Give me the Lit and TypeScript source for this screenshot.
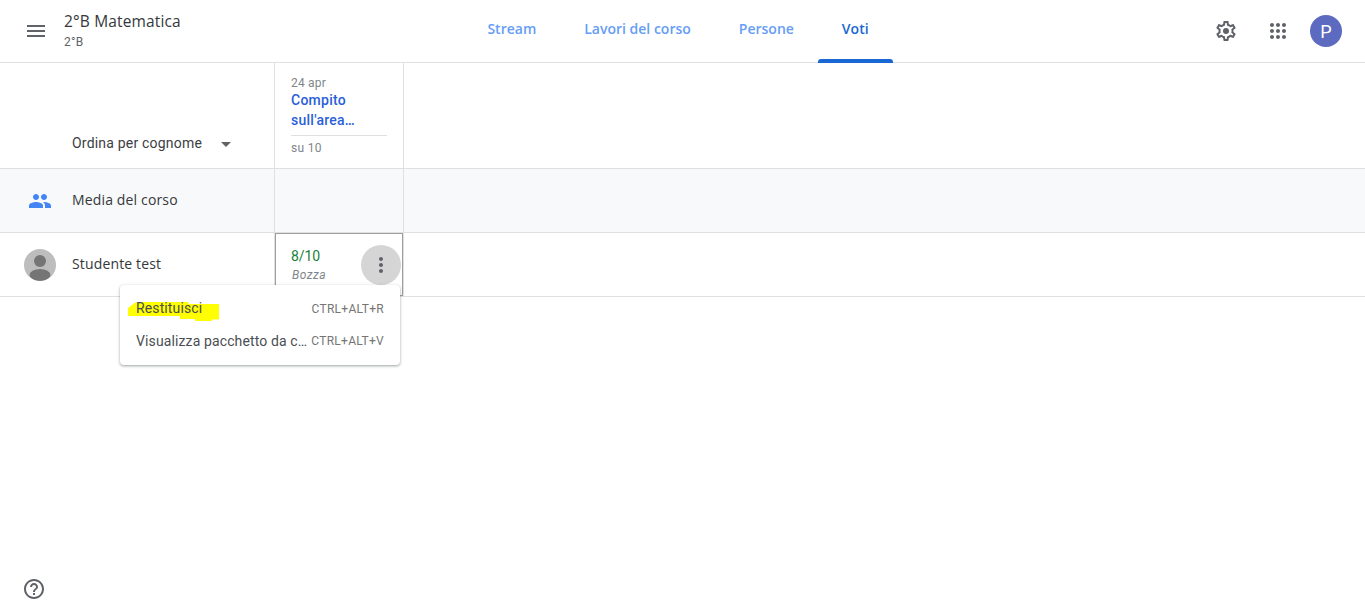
import { LitElement, html, css } from "lit";
import { customElement } from "lit/decorators.js";

@customElement("app-root")
export class AppRoot extends LitElement {
  static styles = css`
    :host { display: block; position: relative; height: 610px; overflow: hidden; background: #fff; font-family: Roboto, "Liberation Sans", sans-serif; color: #3c4043; }
    * { box-sizing: border-box; }
    .header { height: 63px; border-bottom: 1px solid #e0e0e0; display: grid; grid-template-columns: 1fr auto 1fr; align-items: stretch; }
    .left { display: flex; align-items: center; padding-left: 24px; }
    .menu-btn { width: 24px; height: 24px; display: block; fill: #5f6368; }
    .title { margin-left: 16px; display: flex; flex-direction: column; padding-bottom: 2px; }
    .title-main { font-family: "Open Sans", Roboto, sans-serif; font-size: 15.5px; line-height: 20px; color: #35383b; font-weight: 500; letter-spacing: 0.15px; }
    .title-sub { font-size: 12px; line-height: 16px; margin-top: 3px; color: #5f6368; letter-spacing: 0.3px; }
    .tabs { display: flex; align-items: stretch; margin-right: 9px; }
    .tab { position: relative; padding: 0 24px; display: flex; align-items: center; padding-bottom: 6px; font-family: "Open Sans", Roboto, sans-serif; font-size: 14px; font-weight: 600; color: #669df6; }
    .tab.active { color: #1967d2; }
    .tab.active::after { content: ""; position: absolute; left: 0; right: 0; bottom: -1px; height: 4px; background: #1967d2; border-radius: 3px 3px 0 0; }
    .right { display: flex; align-items: center; justify-content: flex-end; padding-right: 23px; }
    .icon { width: 24px; height: 24px; fill: #5f6368; display: block; }
    .apps { margin-left: 28px; }
    .avatar { margin-left: 20px; width: 32px; height: 32px; border-radius: 50%; background: #5c6bc0; color: #fff; display: flex; align-items: center; justify-content: center; font-size: 18px; }
    .row { display: grid; grid-template-columns: 275px 129px 1fr; border-bottom: 1px solid #e0e0e0; }
    .cell { border-right: 1px solid #e0e0e0; }
    .cell.last { border-right: 0; }
    .r1 { height: 106px; }
    .r2 { height: 64px; background: #f8f9fa; }
    .r3 { height: 64px; }
    .sort { display: flex; align-items: flex-end; padding: 0 0 15px 72px; font-size: 14px; line-height: 20px; color: #3c4043; letter-spacing: 0.2px; }
    .sort svg { width: 10px; height: 5px; fill: #5f6368; margin: 0 0 6px 19px; }
    .assign { padding: 12px 16px 0; }
    .date { font-size: 12px; line-height: 16px; color: #80868b; letter-spacing: 0.2px; }
    .name { font-size: 14px; line-height: 20px; font-weight: 500; color: #2a5fd8; letter-spacing: 0.25px; margin-top: -1px; }
    .sep { height: 1px; background: #e0e0e0; margin-top: 5px; }
    .pts { font-size: 12px; line-height: 16px; color: #80868b; margin-top: 4px; letter-spacing: 0.3px; }
    .rowlabel { display: flex; align-items: center; }
    .rowicon { width: 72px; display: flex; justify-content: center; flex: none; padding-left: 8px; }
    .label { font-family: "Open Sans", Roboto, sans-serif; font-size: 14px; font-weight: 500; color: #35383b; letter-spacing: 0.15px; margin-top: -2px; }
    .people { width: 24px; height: 24px; fill: #4285f4; display: block; }
    .ava { width: 32px; height: 32px; display: block; }
    .grade-cell { display: flex; }
    .grade-wrap { position: relative; flex: 1; border: 1px solid #9e9e9e; padding: 12px 15px 0 15px; display: flex; flex-direction: column; }
    .grade { font-size: 14px; line-height: 20px; color: #188038; letter-spacing: -0.1px; }
    .draft { font-size: 12px; line-height: 16px; font-style: italic; color: #80868b; margin: 1px 0 0 1px; letter-spacing: 0.5px; }
    .more { position: absolute; right: 1px; top: 11px; width: 40px; height: 40px; border-radius: 50%; background: #d5d5d5; display: flex; align-items: center; justify-content: center; }
    .popup { position: absolute; left: 120px; top: 285px; width: 280px; height: 80px; background: #fff; border-radius: 4px; box-shadow: 0 1px 2px rgba(60,64,67,.3), 0 1px 3px 1px rgba(60,64,67,.15); padding: 8px 0; z-index: 2; }
    .item { height: 32px; display: flex; align-items: center; justify-content: space-between; padding: 0 16px; font-size: 14px; color: #4a4e52; position: relative; }
    .item span { position: relative; }
    .item .text { white-space: nowrap; letter-spacing: 0.12px; }
    .item .text.up { top: -1px; }
    .key { font-size: 12px; color: #757575; letter-spacing: 0.3px; }
    .hl { position: absolute; left: 8px; top: 7px; width: 92px; height: 22px; }
    .help { position: absolute; left: 22px; top: 577px; width: 24px; height: 24px; fill: #5f6368; }
  `;

  render() {
    return html`
      <div class="header">
        <div class="left">
          <svg class="menu-btn" viewBox="0 0 24 24"><path d="M3 18h18v-2H3v2zm0-5h18v-2H3v2zm0-7v2h18V6H3z"/></svg>
          <div class="title">
            <div class="title-main">2°B Matematica</div>
            <div class="title-sub">2°B</div>
          </div>
        </div>
        <div class="tabs">
          <div class="tab">Stream</div>
          <div class="tab">Lavori del corso</div>
          <div class="tab">Persone</div>
          <div class="tab active">Voti</div>
        </div>
        <div class="right">
          <svg class="icon" viewBox="0 0 24 24"><path d="M19.43 12.98c.04-.32.07-.64.07-.98s-.03-.66-.07-.98l2.11-1.65c.19-.15.24-.42.12-.64l-2-3.46c-.12-.22-.39-.3-.61-.22l-2.49 1c-.52-.4-1.08-.73-1.69-.98l-.38-2.65C14.46 2.18 14.25 2 14 2h-4c-.25 0-.46.18-.49.42l-.38 2.65c-.61.25-1.17.59-1.69.98l-2.49-1c-.23-.09-.49 0-.61.22l-2 3.46c-.13.22-.07.49.12.64l2.11 1.65c-.04.32-.07.65-.07.98s.03.66.07.98l-2.11 1.65c-.19.15-.24.42-.12.64l2 3.46c.12.22.39.3.61.22l2.49-1c.52.4 1.08.73 1.69.98l.38 2.65c.03.24.24.42.49.42h4c.25 0 .46-.18.49-.42l.38-2.65c.61-.25 1.17-.59 1.69-.98l2.49 1c.23.09.49 0 .61-.22l2-3.46c.12-.22.07-.49-.12-.64l-2.11-1.65zM17.45 11.27c.04.31.05.52.05.73s-.02.43-.05.73l-.14 1.13.89.7 1.08.84-.7 1.21-1.27-.51-1.04-.42-.9.68c-.43.32-.84.56-1.25.73l-1.06.43-.16 1.13-.2 1.35h-1.4l-.19-1.35-.16-1.13-1.06-.43c-.43-.18-.83-.41-1.23-.71l-.91-.7-1.06.43-1.27.51-.7-1.21 1.08-.84.89-.7-.14-1.13c-.03-.31-.05-.54-.05-.74s.02-.43.05-.73l.14-1.13-.89-.7-1.08-.84.7-1.21 1.27.51 1.04.42.9-.68c.43-.32.84-.56 1.25-.73l1.06-.43.16-1.13.2-1.35h1.39l.19 1.35.16 1.13 1.06.43c.43.18.83.41 1.23.71l.91.7 1.06-.43 1.27-.51.7 1.21-1.07.85-.89.7.14 1.13zM12 9a3 3 0 1 0 0 6 3 3 0 0 0 0-6z"/></svg>
          <svg class="icon apps" viewBox="0 0 24 24"><path d="M6 8c1.1 0 2-.9 2-2s-.9-2-2-2-2 .9-2 2 .9 2 2 2zm6 12c1.1 0 2-.9 2-2s-.9-2-2-2-2 .9-2 2 .9 2 2 2zm-6 0c1.1 0 2-.9 2-2s-.9-2-2-2-2 .9-2 2 .9 2 2 2zm0-6c1.1 0 2-.9 2-2s-.9-2-2-2-2 .9-2 2 .9 2 2 2zm6 0c1.1 0 2-.9 2-2s-.9-2-2-2-2 .9-2 2 .9 2 2 2zm4-8c0 1.1.9 2 2 2s2-.9 2-2-.9-2-2-2-2 .9-2 2zm-4 2c1.1 0 2-.9 2-2s-.9-2-2-2-2 .9-2 2 .9 2 2 2zm6 6c1.1 0 2-.9 2-2s-.9-2-2-2-2 .9-2 2 .9 2 2 2zm0 6c1.1 0 2-.9 2-2s-.9-2-2-2-2 .9-2 2 .9 2 2 2z"/></svg>
          <div class="avatar">P</div>
        </div>
      </div>

      <div class="row r1">
        <div class="cell sort">Ordina per cognome
          <svg viewBox="0 0 10 5"><path d="M0 0l5 5 5-5z"/></svg>
        </div>
        <div class="cell assign">
          <div class="date">24 apr</div>
          <div class="name">Compito<br />sull'area…</div>
          <div class="sep"></div>
          <div class="pts">su 10</div>
        </div>
        <div class="cell last"></div>
      </div>

      <div class="row r2">
        <div class="cell rowlabel">
          <div class="rowicon">
            <svg class="people" viewBox="0 0 24 24"><path d="M16 11c1.66 0 2.99-1.34 2.99-3S17.66 5 16 5c-1.66 0-3 1.34-3 3s1.34 3 3 3zm-8 0c1.66 0 2.99-1.34 2.99-3S9.66 5 8 5C6.34 5 5 6.34 5 8s1.34 3 3 3zm0 2c-2.33 0-7 1.17-7 3.5V19h14v-2.5c0-2.33-4.67-3.5-7-3.5zm8 0c-.29 0-.62.02-.97.05 1.16.84 1.97 1.97 1.97 3.45V19h6v-2.5c0-2.33-4.67-3.5-7-3.5z"/></svg>
          </div>
          <span class="label">Media del corso</span>
        </div>
        <div class="cell"></div>
        <div class="cell last"></div>
      </div>

      <div class="row r3">
        <div class="cell rowlabel">
          <div class="rowicon">
            <svg class="ava" viewBox="0 0 32 32">
              <defs><clipPath id="c"><circle cx="16" cy="16" r="16"/></clipPath></defs>
              <circle cx="16" cy="16" r="16" fill="#bdbdbd"/>
              <g clip-path="url(#c)" fill="#757575">
                <circle cx="16" cy="12" r="6"/>
                <ellipse cx="16" cy="26" rx="10.5" ry="6"/>
              </g>
            </svg>
          </div>
          <span class="label">Studente test</span>
        </div>
        <div class="cell grade-cell">
          <div class="grade-wrap">
            <div class="grade">8/10</div>
            <div class="draft">Bozza</div>
            <div class="more">
              <svg class="icon" viewBox="0 0 24 24"><path d="M12 8c1.1 0 2-.9 2-2s-.9-2-2-2-2 .9-2 2 .9 2 2 2zm0 2c-1.1 0-2 .9-2 2s.9 2 2 2 2-.9 2-2-.9-2-2-2zm0 6c-1.1 0-2 .9-2 2s.9 2 2 2 2-.9 2-2-.9-2-2-2z"/></svg>
            </div>
          </div>
        </div>
        <div class="cell last"></div>
      </div>

      <div class="popup">
        <div class="item">
          <svg class="hl" viewBox="0 0 92 22"><path d="M0 8 L8 2 L60 2 L61 4 L91 4 L91 19.5 L84 19.5 L84 21 L67 21 L67 19 L52 19 L52 16 L0 16 Z" fill="#ffff00"/></svg>
          <span class="text up">Restituisci</span>
          <span class="key">CTRL+ALT+R</span>
        </div>
        <div class="item">
          <span class="text">Visualizza pacchetto da c…</span>
          <span class="key">CTRL+ALT+V</span>
        </div>
      </div>

      <svg class="help" viewBox="0 0 24 24"><path d="M11 18h2v-2h-2v2zm1-16C6.48 2 2 6.48 2 12s4.48 10 10 10 10-4.48 10-10S17.52 2 12 2zm0 18c-4.41 0-8-3.59-8-8s3.59-8 8-8 8 3.59 8 8-3.59 8-8 8zm0-14c-2.21 0-4 1.79-4 4h2c0-1.1.9-2 2-2s2 .9 2 2c0 2-3 1.75-3 5h2c0-2.25 3-2.5 3-5 0-2.21-1.79-4-4-4z"/></svg>
    `;
  }
}
